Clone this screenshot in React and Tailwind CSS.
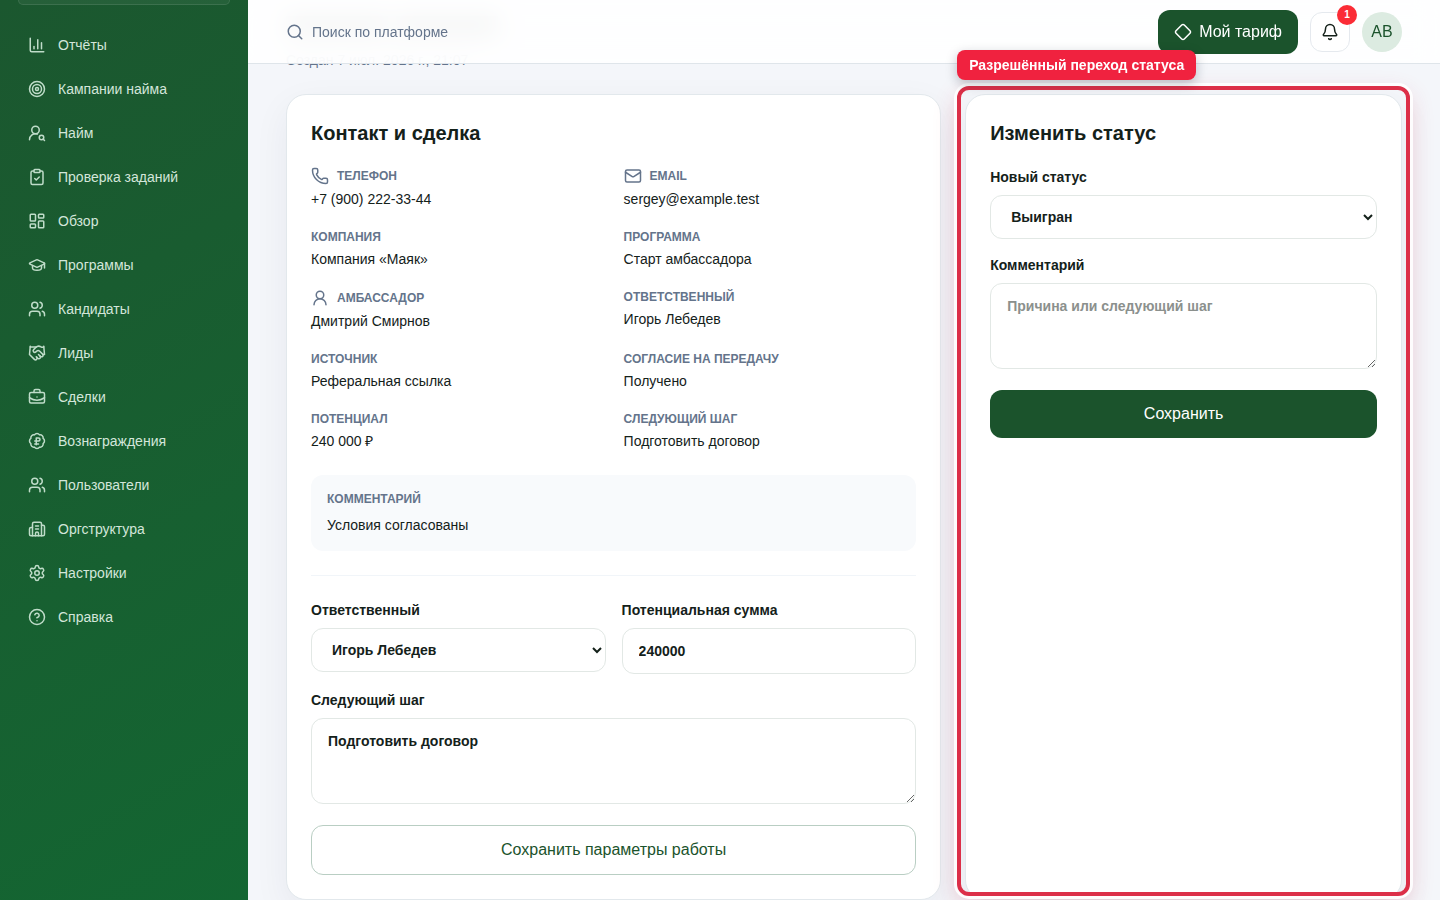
import React from 'react';
import {
  BadgeRussianRuble,
  Bell,
  BriefcaseBusiness,
  Building2,
  ChartColumn,
  CircleQuestionMark,
  ClipboardCheck,
  Diamond,
  GraduationCap,
  Handshake,
  LayoutDashboard,
  Mail,
  Phone,
  Search,
  Settings,
  Target,
  UserRound,
  UserRoundSearch,
  Users,
} from 'lucide-react';

const menu = [
  { title: 'Отчёты', icon: ChartColumn },
  { title: 'Кампании найма', icon: Target },
  { title: 'Найм', icon: UserRoundSearch },
  { title: 'Проверка заданий', icon: ClipboardCheck },
  { title: 'Обзор', icon: LayoutDashboard },
  { title: 'Программы', icon: GraduationCap },
  { title: 'Кандидаты', icon: Users },
  { title: 'Лиды', icon: Handshake },
  { title: 'Сделки', icon: BriefcaseBusiness },
  { title: 'Вознаграждения', icon: BadgeRussianRuble },
  { title: 'Пользователи', icon: Users },
  { title: 'Оргструктура', icon: Building2 },
  { title: 'Настройки', icon: Settings },
  { title: 'Справка', icon: CircleQuestionMark },
];

const details = [
  { label: 'Телефон', value: '+7 (900) 222-33-44', icon: Phone },
  { label: 'Email', value: 'sergey@example.test', icon: Mail },
  { label: 'Компания', value: 'Компания «Маяк»' },
  { label: 'Программа', value: 'Старт амбассадора' },
  { label: 'Амбассадор', value: 'Дмитрий Смирнов', icon: UserRound },
  { label: 'Ответственный', value: 'Игорь Лебедев' },
  { label: 'Источник', value: 'Реферальная ссылка' },
  { label: 'Согласие на передачу', value: 'Получено' },
  { label: 'Потенциал', value: '240 000 ₽' },
  { label: 'Следующий шаг', value: 'Подготовить договор' },
];

const fieldClass = 'mt-2 block w-full rounded-xl border border-[#e2e8e5] bg-white px-4 text-sm';

const Sidebar = () => (
  <aside className="w-[248px] shrink-0 bg-linear-150 from-[#1b572f] to-[#136632] px-4">
    <div className="mx-0.5 h-[5px] rounded-b-xl border border-t-0 border-white/10 bg-white/5"></div>
    <nav className="mt-[18px]">
      {menu.map(({ title, icon: Icon }) => (
        <a key={title} href="#" className="flex h-11 items-center gap-3 px-3 text-sm text-[#d3e6da]">
          <Icon size={18} className="text-[#bfdcc9]" />
          {title}
        </a>
      ))}
    </nav>
  </aside>
);

const Header = () => (
  <header className="relative z-10 flex h-16 shrink-0 items-center justify-between border-b border-[#dfe5ea] bg-white/90 px-[38px] backdrop-blur-md">
    <div className="flex items-center gap-2 text-sm text-[#64748b]">
      <Search size={18} />
      <span>Поиск по платформе</span>
    </div>
    <div className="flex items-center gap-3">
      <button className="flex h-11 items-center gap-[7px] rounded-xl bg-[#1b532c] px-4 text-base text-white">
        <Diamond size={18} />
        Мой тариф
      </button>
      <button className="relative flex size-10 items-center justify-center rounded-xl border border-[#e5e9ee] bg-white">
        <Bell size={18} />
        <span className="absolute -top-2 -right-2 flex size-5 items-center justify-center rounded-full bg-[#fb2c36] text-[10px] font-bold text-white">
          1
        </span>
      </button>
      <div className="flex size-10 items-center justify-center rounded-full bg-[#dcebe1] text-base text-[#1b532c]">АВ</div>
    </div>
  </header>
);

const Detail = ({ label, value, icon: Icon }) => (
  <div>
    <div className="flex items-center gap-2 text-xs font-bold text-[#64748b] uppercase">
      {Icon && <Icon size={18} />}
      {label}
    </div>
    <p className="mt-1 text-sm">{value}</p>
  </div>
);

const Card = ({ title, children }) => (
  <section className="h-full rounded-[20px] border border-[#e2e8ec] bg-white p-6 shadow-[0_12px_36px_rgba(15,40,60,0.06)]">
    <h2 className="text-xl font-bold">{title}</h2>
    {children}
  </section>
);

const App = () => (
  <div className="flex h-[900px] overflow-hidden bg-[#f4f6fa] font-['Liberation_Sans',Arial,sans-serif] text-[#14211a]">
    <Sidebar />
    <div className="flex min-w-0 flex-1 flex-col">
      <Header />
      <main className="-mt-14 px-[38px]">
        {/* заголовок уехал под шапку, видно только размытое пятно */}
        <div className="flex h-9 items-center gap-2">
          <div className="h-5 w-[102px] bg-[#14211a]/40"></div>
          <div className="h-5 w-[102px] bg-[#14211a]/40"></div>
        </div>
        <p className="mt-1.5 text-sm text-[#64748b]">Создан 7 июл. 2026 г., 21:07</p>

        <div className="mt-6 grid grid-cols-[1.5fr_1fr] gap-6">
          <Card title="Контакт и сделка">
            <div className="mt-5 grid grid-cols-2 gap-5">
              {details.map(item => (
                <Detail key={item.label} {...item} />
              ))}
            </div>
            <div className="mt-6 rounded-xl bg-[#f8fafc] p-4">
              <div className="text-xs font-bold text-[#64748b] uppercase">Комментарий</div>
              <p className="mt-2 text-sm">Условия согласованы</p>
            </div>

            <form className="mt-6 border-t border-[#f1f5f9] pt-6 text-sm font-bold">
              <div className="grid grid-cols-2 gap-4">
                <label>
                  Ответственный
                  <select className={`${fieldClass} h-11`}>
                    <option>Игорь Лебедев</option>
                  </select>
                </label>
                <label>
                  Потенциальная сумма
                  <input className={`${fieldClass} h-[46px]`} defaultValue="240000" />
                </label>
              </div>
              <label className="mt-4 block">
                Следующий шаг
                <textarea className={`${fieldClass} h-[86px] py-3`} defaultValue="Подготовить договор" />
              </label>
              <button type="button" className="mt-[21px] h-[50px] w-full rounded-xl border border-[#b9cec3] text-base font-normal text-[#1b532c]">
                Сохранить параметры работы
              </button>
            </form>
          </Card>

          <div className="relative">
            <Card title="Изменить статус">
              <form className="mt-5 text-sm font-bold">
                <label className="block">
                  Новый статус
                  <select className={`${fieldClass} h-11`}>
                    <option>Выигран</option>
                  </select>
                </label>
                <label className="mt-4 block">
                  Комментарий
                  <textarea
                    className={`${fieldClass} h-[86px] py-3 placeholder:text-[#8b908d]`}
                    placeholder="Причина или следующий шаг"
                  />
                </label>
                <button type="button" className="mt-[21px] h-12 w-full rounded-xl bg-[#1b532c] text-base font-normal text-white">
                  Сохранить
                </button>
              </form>
            </Card>
            {/* подсветка блока поверх карточки */}
            <div className="pointer-events-none absolute -inset-x-2 -top-2 bottom-1 z-20 rounded-xl border-4 border-[#dc2f48] shadow-[0_0_0_3px_rgba(255,255,255,0.9),0_8px_24px_rgba(220,38,70,0.2)]"></div>
            <div className="absolute -top-11 -left-2 z-20 flex h-[30px] items-center rounded-lg bg-[#f0223f] px-3 text-sm font-bold whitespace-nowrap text-white shadow-[0_4px_12px_rgba(15,23,42,0.25)]">
              Разрешённый переход статуса
            </div>
          </div>
        </div>
      </main>
    </div>
  </div>
);

export default App;
